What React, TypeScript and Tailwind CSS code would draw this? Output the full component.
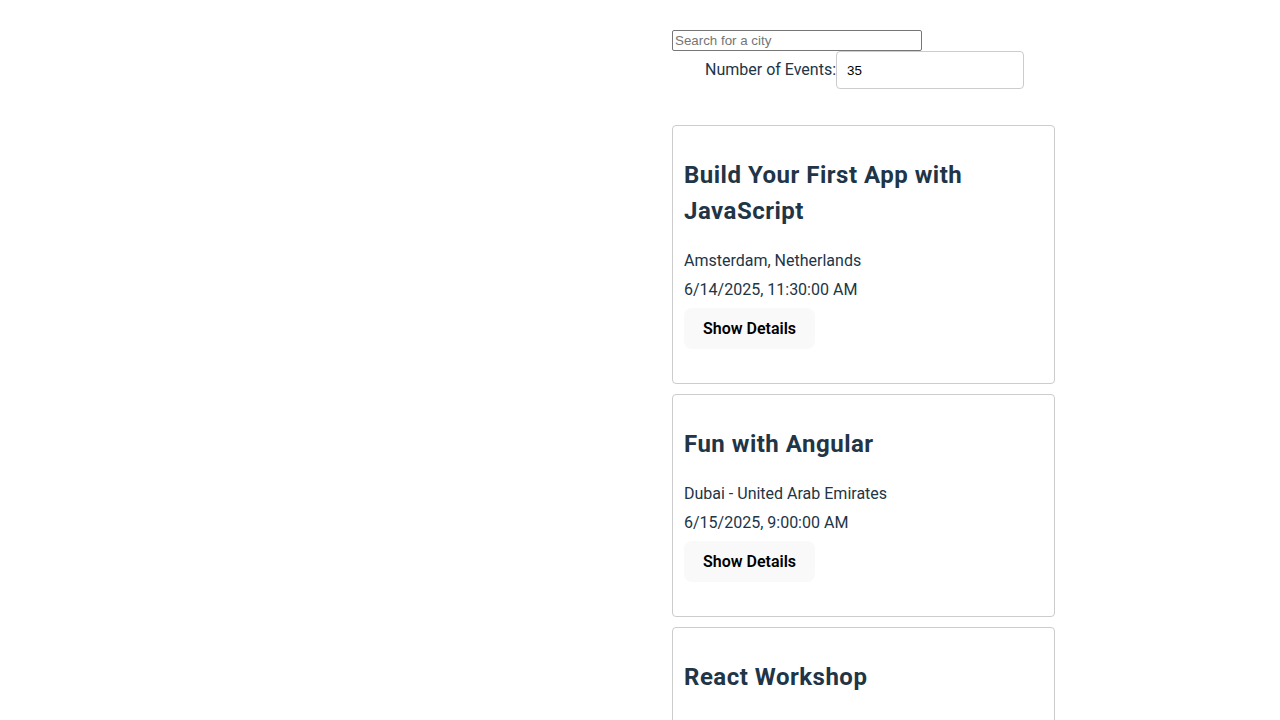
import React from "react";

const events = [
  { title: "Build Your First App with JavaScript", location: "Amsterdam, Netherlands", date: "6/14/2025, 11:30:00 AM" },
  { title: "Fun with Angular", location: "Dubai - United Arab Emirates", date: "6/15/2025, 9:00:00 AM" },
  { title: "React Workshop", location: "Berlin, Germany", date: "6/16/2025, 2:00:00 PM" },
];

export default function App() {
  return (
    <div className="min-h-screen bg-white text-[#213547]" style={{ fontFamily: 'Roboto, "Noto Sans", sans-serif' }}>
      <div className="grid grid-cols-2">
        <div />
        <div className="pl-8 pt-[30px]">
          <div className="flex">
            <input
              type="text"
              placeholder="Search for a city"
              className="w-[250px] h-[21px] border border-[#767676] rounded-[2px] px-[2px] text-[13.33px] text-black placeholder:text-[#757575] outline-none"
              style={{ fontFamily: '"Liberation Sans", Arial, sans-serif' }}
            />
          </div>
          <div className="flex items-center pl-[33px]">
            <label className="text-[16px] leading-6">Number of Events:</label>
            <input
              type="number"
              defaultValue={35}
              className="w-[188px] h-[38px] border border-[#cccccc] rounded-[4px] pl-[10px] text-[13.33px] text-black outline-none"
              style={{ fontFamily: '"Liberation Sans", Arial, sans-serif' }}
            />
          </div>
          <ul className="mt-9 w-[383px] flex flex-col gap-[10px]">
            {events.map((e) => (
              <li key={e.title} className="border border-[#cccccc] rounded-[4px] px-[11px] pt-[11px] pb-[34px]">
                <h2 className="mt-5 mb-5 text-[24px] leading-9 font-bold tracking-[0.5px]">{e.title}</h2>
                <p className="text-[16px] leading-6">{e.location}</p>
                <p className="mt-[5px] text-[16px] leading-6">{e.date}</p>
                <button className="mt-[6px] h-[41px] px-[19px] rounded-[8px] bg-[#f9f9f9] text-black text-[16px] font-semibold">
                  Show Details
                </button>
              </li>
            ))}
          </ul>
        </div>
      </div>
    </div>
  );
}
